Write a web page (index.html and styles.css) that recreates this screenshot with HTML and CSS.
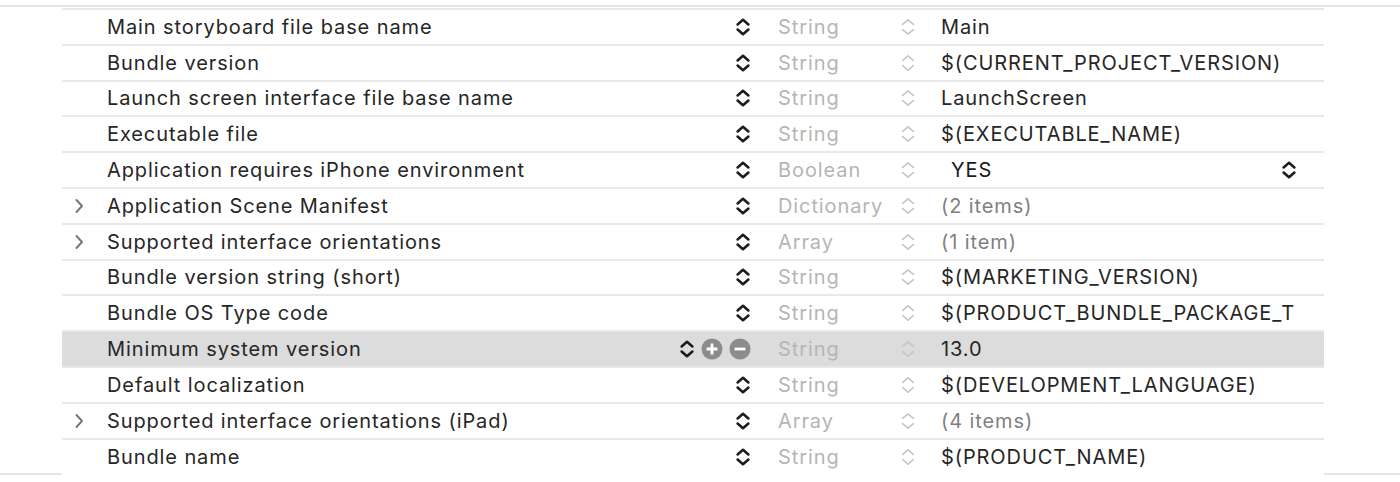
FILE: index.html
```html
<!DOCTYPE html>
<html>
<head>
<meta charset="utf-8">
<link rel="stylesheet" href="styles.css">
</head>
<body>
<svg width="0" height="0" class="defs">
  <defs>
    <symbol id="step" viewBox="0 0 16 20">
      <path d="M2.6 7.4 L8 2.8 L13.4 7.4 M2.6 12.6 L8 17.2 L13.4 12.6" fill="none" stroke-linecap="round" stroke-linejoin="round"/>
    </symbol>
    <symbol id="chev" viewBox="0 0 10 16">
      <path d="M2.5 2 L8 8 L2.5 14" fill="none" stroke-linecap="round" stroke-linejoin="round"/>
    </symbol>
  </defs>
</svg>
<div class="topline"></div>
<div class="frame">
  <div class="gutter"></div>
  <div class="table">
    <div class="row"><div class="disc"></div><div class="key">Main storyboard file base name</div><div class="ctl"><svg class="kstep"><use href="#step"/></svg></div><div class="type">String</div><div class="vs"><svg class="vstep"><use href="#step"/></svg></div><div class="val">Main</div></div>
    <div class="row"><div class="disc"></div><div class="key">Bundle version</div><div class="ctl"><svg class="kstep"><use href="#step"/></svg></div><div class="type">String</div><div class="vs"><svg class="vstep"><use href="#step"/></svg></div><div class="val">$(CURRENT_PROJECT_VERSION)</div></div>
    <div class="row"><div class="disc"></div><div class="key">Launch screen interface file base name</div><div class="ctl"><svg class="kstep"><use href="#step"/></svg></div><div class="type">String</div><div class="vs"><svg class="vstep"><use href="#step"/></svg></div><div class="val">LaunchScreen</div></div>
    <div class="row"><div class="disc"></div><div class="key">Executable file</div><div class="ctl"><svg class="kstep"><use href="#step"/></svg></div><div class="type">String</div><div class="vs"><svg class="vstep"><use href="#step"/></svg></div><div class="val">$(EXECUTABLE_NAME)</div></div>
    <div class="row"><div class="disc"></div><div class="key">Application requires iPhone environment</div><div class="ctl"><svg class="kstep"><use href="#step"/></svg></div><div class="type">Boolean</div><div class="vs"><svg class="vstep"><use href="#step"/></svg></div><div class="val"><div class="popup"><span class="yes">YES</span><svg class="kstep"><use href="#step"/></svg></div></div></div>
    <div class="row"><div class="disc"><svg class="chev"><use href="#chev"/></svg></div><div class="key">Application Scene Manifest</div><div class="ctl"><svg class="kstep"><use href="#step"/></svg></div><div class="type">Dictionary</div><div class="vs"><svg class="vstep"><use href="#step"/></svg></div><div class="val dim">(2 items)</div></div>
    <div class="row"><div class="disc"><svg class="chev"><use href="#chev"/></svg></div><div class="key">Supported interface orientations</div><div class="ctl"><svg class="kstep"><use href="#step"/></svg></div><div class="type">Array</div><div class="vs"><svg class="vstep"><use href="#step"/></svg></div><div class="val dim">(1 item)</div></div>
    <div class="row"><div class="disc"></div><div class="key">Bundle version string (short)</div><div class="ctl"><svg class="kstep"><use href="#step"/></svg></div><div class="type">String</div><div class="vs"><svg class="vstep"><use href="#step"/></svg></div><div class="val">$(MARKETING_VERSION)</div></div>
    <div class="row"><div class="disc"></div><div class="key">Bundle OS Type code</div><div class="ctl"><svg class="kstep"><use href="#step"/></svg></div><div class="type">String</div><div class="vs"><svg class="vstep"><use href="#step"/></svg></div><div class="val">$(PRODUCT_BUNDLE_PACKAGE_T</div></div>
    <div class="row sel"><div class="disc"></div><div class="key">Minimum system version</div><div class="ctl"><svg class="kstep"><use href="#step"/></svg><svg class="circ" viewBox="0 0 22 22"><circle cx="11" cy="11" r="10.5"/><path d="M11 5.6 V16.4 M5.6 11 H16.4"/></svg><svg class="circ" viewBox="0 0 22 22"><circle cx="11" cy="11" r="10.5"/><path d="M5.6 11 H16.4"/></svg></div><div class="type">String</div><div class="vs"><svg class="vstep"><use href="#step"/></svg></div><div class="val">13.0</div></div>
    <div class="row"><div class="disc"></div><div class="key">Default localization</div><div class="ctl"><svg class="kstep"><use href="#step"/></svg></div><div class="type">String</div><div class="vs"><svg class="vstep"><use href="#step"/></svg></div><div class="val">$(DEVELOPMENT_LANGUAGE)</div></div>
    <div class="row"><div class="disc"><svg class="chev"><use href="#chev"/></svg></div><div class="key">Supported interface orientations (iPad)</div><div class="ctl"><svg class="kstep"><use href="#step"/></svg></div><div class="type">Array</div><div class="vs"><svg class="vstep"><use href="#step"/></svg></div><div class="val dim">(4 items)</div></div>
    <div class="row"><div class="disc"></div><div class="key">Bundle name</div><div class="ctl"><svg class="kstep"><use href="#step"/></svg></div><div class="type">String</div><div class="vs"><svg class="vstep"><use href="#step"/></svg></div><div class="val">$(PRODUCT_NAME)</div></div>
  </div>
  <div class="gutter"></div>
</div>
</body>
</html>
```
FILE: styles.css
```css
html, body {
  margin: 0;
  padding: 0;
  background: #ffffff;
}
body {
  font-family: Inter, "Liberation Sans", sans-serif;
  font-size: 20px;
  letter-spacing: 0.9px;
  color: #262626;
  overflow: hidden;
}
.defs {
  position: absolute;
  width: 0;
  height: 0;
}
.topline {
  margin-top: 5px;
  height: 2px;
  background: #e6e6e6;
}
.frame {
  display: flex;
  margin-top: 1px;
}
.gutter {
  flex: 1;
  border-bottom: 2px solid #e6e6e6;
}
.gutter:first-child {
  flex: 0 0 62px;
}
.table {
  flex: 0 0 1262px;
  border-top: 2px solid #e8e8e8;
  background: #fff;
}
.row {
  display: grid;
  grid-template-columns: 45px 565px 90px 134px 29px 399px;
  height: 35.8px;
  box-sizing: border-box;
  border-bottom: 2px solid #e8e8e8;
  align-items: center;
}
.row:last-child {
  border-bottom: none;
}
.row.sel {
  background: #dcdcdc;
}
.disc {
  display: flex;
  justify-content: flex-start;
  padding-left: 12px;
}
.chev {
  width: 10px;
  height: 16px;
  stroke: #767676;
  stroke-width: 1.9;
}
.key {
  white-space: nowrap;
  overflow: hidden;
}
.ctl {
  display: flex;
  justify-content: flex-end;
  align-items: center;
  gap: 6px;
  padding-right: 11px;
}
.kstep {
  width: 16px;
  height: 20px;
  stroke: #1c1c1c;
  stroke-width: 2.6;
}
.circ {
  width: 22px;
  height: 22px;
}
.circ circle {
  fill: #8c8c8c;
}
.circ path {
  stroke: #ffffff;
  stroke-width: 2.8;
  fill: none;
}
.type {
  color: #b5b5b5;
  padding-left: 16px;
  white-space: nowrap;
}
.vs {
  display: flex;
  justify-content: flex-start;
  padding-left: 4px;
}
.vstep {
  width: 16px;
  height: 20px;
  stroke: #c6c6c6;
  stroke-width: 1.7;
}
.val {
  padding-left: 16px;
  padding-right: 10px;
  white-space: nowrap;
  overflow: hidden;
  color: #262626;
}
.val.dim {
  color: #7f7f7f;
}
.popup {
  display: flex;
  align-items: center;
  justify-content: space-between;
  width: 356px;
  padding-left: 10px;
  box-sizing: border-box;
}
.yes {
  color: #1a1a1a;
}
```
